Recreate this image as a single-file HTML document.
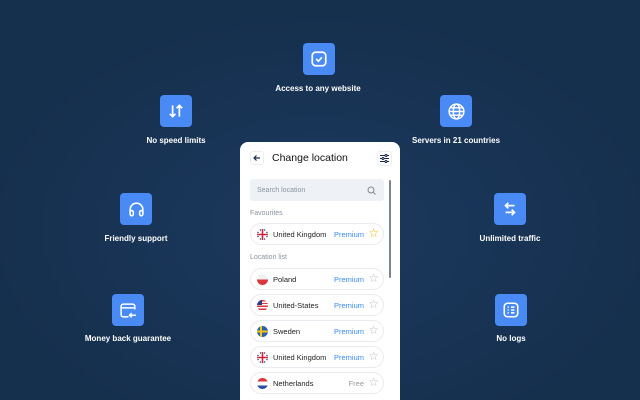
<!DOCTYPE html>
<html><head><meta charset="utf-8"><style>
*{margin:0;padding:0;box-sizing:border-box}
html,body{width:640px;height:400px;overflow:hidden}
body{position:relative;font-family:"Liberation Sans",sans-serif;
background:radial-gradient(ellipse 340px 220px at 320px 230px,#1b3a5e 0%,#183354 60%,#15304d 100%);}
.ic{position:absolute;width:32px;height:32px;border-radius:4px;background:#4a8af4;display:flex;align-items:center;justify-content:center}
.lb{position:absolute;color:#fff;font-size:8px;font-weight:bold;white-space:nowrap;transform:translateX(-50%)}
.card{position:absolute;left:240px;top:142px;width:160px;height:258px;background:#fff;border-radius:8px 8px 0 0}
.t{position:absolute;font-size:7px;color:#8a93a0}
.row{position:absolute;left:10px;width:134px;height:22px;border:1px solid #e8ebef;border-radius:11px;font-size:7.5px;color:#222}
.row .f{position:absolute;left:6px;top:5px;width:11px;height:11px;border-radius:50%;overflow:hidden}
.row .n{position:absolute;left:22px;top:6px}
.row .p{position:absolute;right:19px;top:6px;color:#3a8af0}
.row .s{position:absolute;right:4px;top:2px;font-size:12px;color:#bbb}
</style></head><body>
<div class="ic" style="left:303px;top:43px"><svg width="18" height="18" viewBox="0 0 16 16" fill="none" stroke="#fff" stroke-width="1.5"><rect x="2" y="2" width="12" height="12" rx="3"/><path d="M5.5 8l2 2 3-3.5"/></svg></div>
<div class="lb" style="left:318px;top:84px">Access to any website</div>
<div class="ic" style="left:160px;top:95px"><svg width="18" height="18" viewBox="0 0 16 16" fill="none" stroke="#fff" stroke-width="1.5"><path d="M5 3v10M2.5 10.5L5 13l2.5-2.5M11 13V3M8.5 5.5L11 3l2.5 2.5"/></svg></div>
<div class="lb" style="left:176px;top:136px">No speed limits</div>
<div class="ic" style="left:440px;top:95px"><svg width="19" height="19" viewBox="0 0 18 18" fill="none" stroke="#fff" stroke-width="1.4"><circle cx="9" cy="9" r="7"/><ellipse cx="9" cy="9" rx="3" ry="7"/><path d="M2 9h14M3 5.5h12M3 12.5h12"/></svg></div>
<div class="lb" style="left:456px;top:136px">Servers in 21 countries</div>
<div class="ic" style="left:120px;top:193px"><svg width="19" height="19" viewBox="0 0 18 18" fill="none" stroke="#fff" stroke-width="1.5"><path d="M3 12V9a6 6 0 0112 0v3"/><rect x="3" y="10" width="3" height="5" rx="1.5"/><rect x="12" y="10" width="3" height="5" rx="1.5"/></svg></div>
<div class="lb" style="left:136px;top:234px">Friendly support</div>
<div class="ic" style="left:494px;top:193px"><svg width="18" height="18" viewBox="0 0 16 16" fill="none" stroke="#fff" stroke-width="1.5"><path d="M12 5H4M6.5 2.5L4 5l2.5 2.5M4 11h8M9.5 8.5L12 11l-2.5 2.5"/></svg></div>
<div class="lb" style="left:510px;top:234px">Unlimited traffic</div>
<div class="ic" style="left:112px;top:294px"><svg width="19" height="19" viewBox="0 0 18 18" fill="none" stroke="#fff" stroke-width="1.4"><path d="M15 8V5a2 2 0 00-2-2H4a2 2 0 00-2 2v8a2 2 0 002 2h5M2 6.5h13M16 13.5h-6M12 11.5l-2 2 2 2"/></svg></div>
<div class="lb" style="left:128px;top:334px">Money back guarantee</div>
<div class="ic" style="left:495px;top:294px"><svg width="18" height="18" viewBox="0 0 16 16" fill="none" stroke="#fff" stroke-width="1.4"><rect x="2" y="2" width="12" height="12" rx="3"/><path d="M5 5.5h1M8 5.5h3M5 8h1M8 8h3M5 10.5h1M8 10.5h3"/></svg></div>
<div class="lb" style="left:511px;top:334px">No logs</div>

<div class="card">
 <div style="position:absolute;left:10px;top:9px;width:14px;height:14px;border:1px solid #eceef2;border-radius:3px"><svg width="12" height="12" viewBox="0 0 12 12" fill="none" stroke="#1a2a4a" stroke-width="1.2" style="position:absolute;left:0;top:0"><path d="M9 6H3M5.5 3.5L3 6l2.5 2.5"/></svg></div>
 <div style="position:absolute;left:32px;top:10px;font-size:10.5px;color:#111;">Change location</div>
 <div style="position:absolute;left:137px;top:9px;width:15px;height:15px;border:1px solid #eceef2;border-radius:3px"><svg width="13" height="13" viewBox="0 0 13 13" fill="none" stroke="#1a2a4a" stroke-width="1"><path d="M2 3.5h9M2 6.5h9M2 9.5h9"/><circle cx="8" cy="3.5" r="1" fill="#fff"/><circle cx="5" cy="6.5" r="1" fill="#fff"/><circle cx="8" cy="9.5" r="1" fill="#fff"/></svg></div>
 <div style="position:absolute;left:10px;top:37px;width:134px;height:22px;background:#eef2f7;border-radius:3px"><span style="position:absolute;left:7px;top:8px;font-size:7px;color:#8a93a0">Search location</span><svg width="9" height="9" viewBox="0 0 9 9" fill="none" stroke="#888" stroke-width="1" style="position:absolute;right:8px;top:7px"><circle cx="4" cy="4" r="3"/><path d="M6.2 6.2L8.5 8.5"/></svg></div>
 <div style="position:absolute;left:149px;top:38px;width:2px;height:98px;background:#7b8594;border-radius:1px"></div>
 <div class="t" style="left:10px;top:68px">Favourites</div>
 <div class="row" style="top:81px"><div class="f" style="background:#2b3e8a"><svg width="11" height="11"><path d="M0 0L11 11M11 0L0 11" stroke="#fff" stroke-width="2.5"/><path d="M5.5 0v11M0 5.5h11" stroke="#fff" stroke-width="3"/><path d="M5.5 0v11M0 5.5h11" stroke="#d0253a" stroke-width="1.6"/></svg></div><span class="n">United Kingdom</span><span class="p">Premium</span><span class="s" style="color:#f2b400">☆</span></div>
 <div class="t" style="left:10px;top:112px">Location list</div>
 <div class="row" style="top:126px"><div class="f" style="background:linear-gradient(#f1f1f1 50%,#d9363e 50%)"></div><span class="n">Poland</span><span class="p">Premium</span><span class="s">☆</span></div>
 <div class="row" style="top:152px"><div class="f" style="background:repeating-linear-gradient(#d9363e 0 1.4px,#fff 1.4px 2.8px)"><div style="width:5px;height:5px;background:#2b3e8a"></div></div><span class="n">United-States</span><span class="p">Premium</span><span class="s">☆</span></div>
 <div class="row" style="top:178px"><div class="f" style="background:#2b62b0"><svg width="11" height="11"><path d="M4 0v11M0 5.5h11" stroke="#f5c518" stroke-width="2"/></svg></div><span class="n">Sweden</span><span class="p">Premium</span><span class="s">☆</span></div>
 <div class="row" style="top:204px"><div class="f" style="background:#2b3e8a"><svg width="11" height="11"><path d="M0 0L11 11M11 0L0 11" stroke="#fff" stroke-width="2.5"/><path d="M5.5 0v11M0 5.5h11" stroke="#fff" stroke-width="3"/><path d="M5.5 0v11M0 5.5h11" stroke="#d0253a" stroke-width="1.6"/></svg></div><span class="n">United Kingdom</span><span class="p">Premium</span><span class="s">☆</span></div>
 <div class="row" style="top:230px"><div class="f" style="background:linear-gradient(#d9363e 33%,#fff 33% 66%,#2b4ea0 66%)"></div><span class="n">Netherlands</span><span class="p" style="color:#999">Free</span><span class="s">☆</span></div>
</div>
</body></html>
